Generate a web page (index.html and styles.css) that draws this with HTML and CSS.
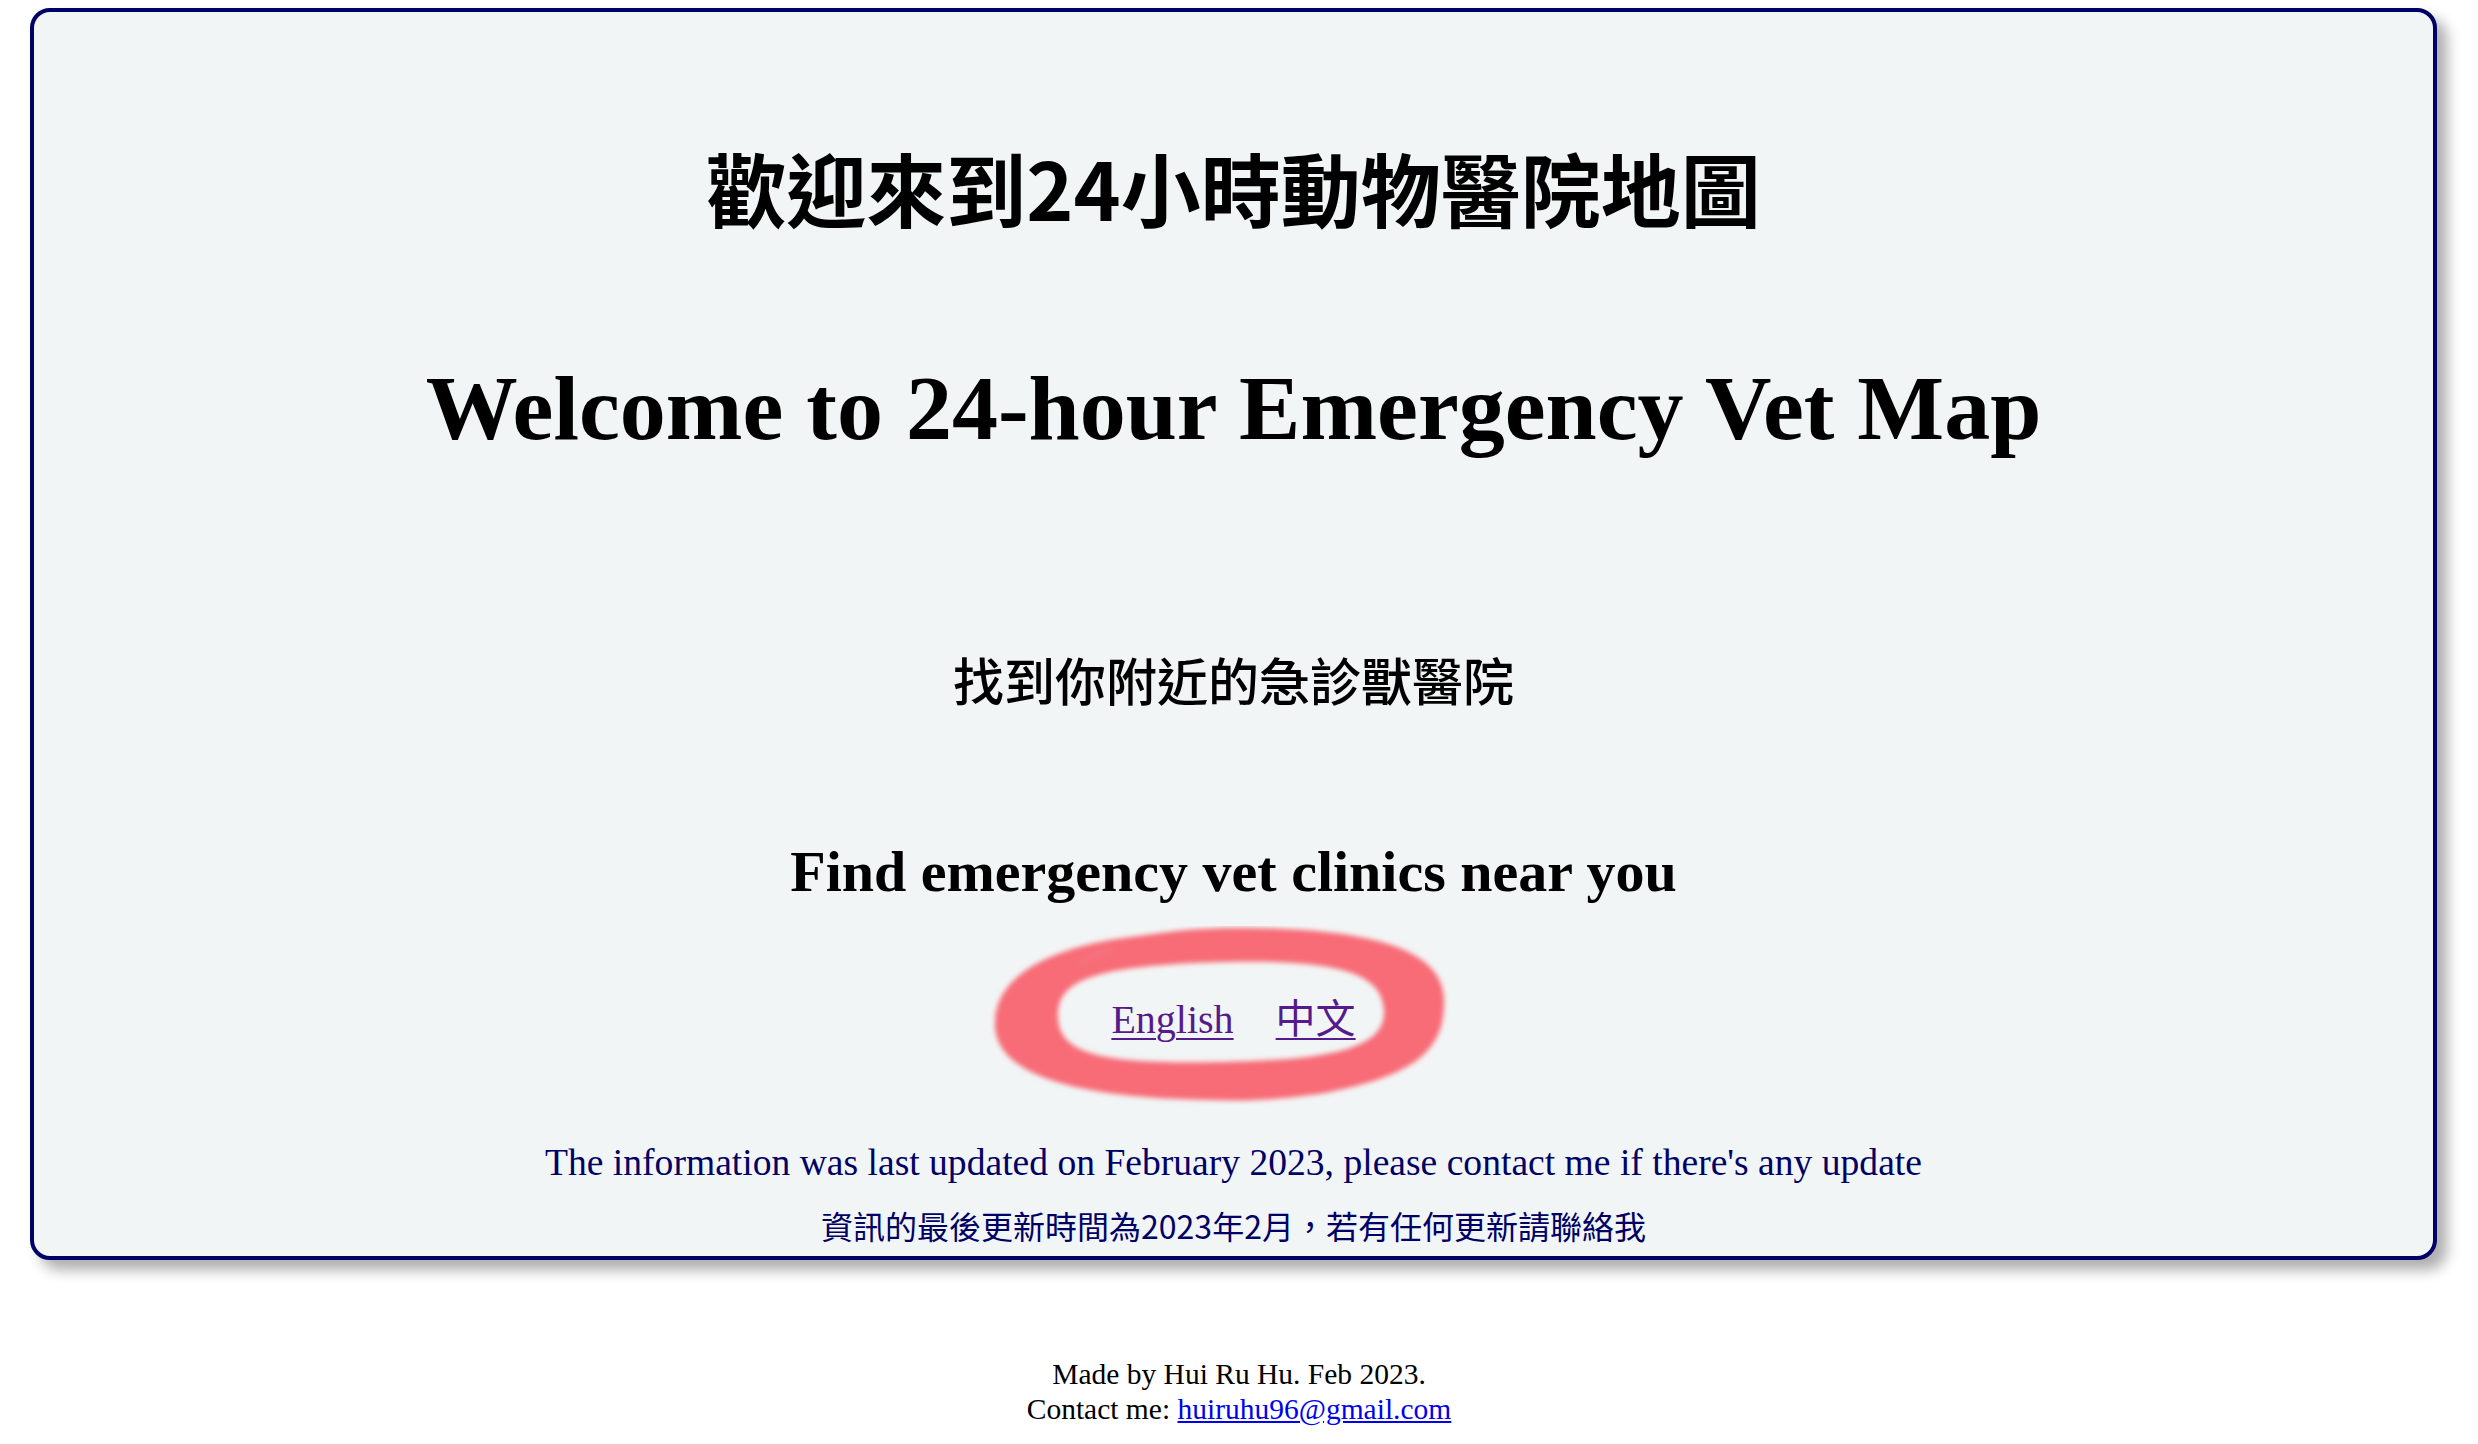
FILE: index.html
```html
<!DOCTYPE html>
<html lang="zh-Hant">
<head>
<meta charset="utf-8">
<title>24-hour Emergency Vet Map</title>
<link rel="stylesheet" href="styles.css">
</head>
<body>
<main class="card">
  <h1 class="title-zh">歡迎來到24小時動物醫院地圖</h1>
  <h1 class="title-en">Welcome to 24-hour Emergency Vet Map</h1>
  <h2 class="sub-zh">找到你附近的急診獸醫院</h2>
  <h2 class="sub-en">Find emergency vet clinics near you</h2>
  <div class="links">
    <svg class="circle" width="470" height="180" viewBox="0 0 470 180" aria-hidden="true">
      <defs>
        <filter id="soft" x="-10%" y="-10%" width="120%" height="120%">
          <feGaussianBlur stdDeviation="2.6"/>
        </filter>
      </defs>
      <g filter="url(#soft)">
        <path fill="#f8636f" fill-rule="evenodd" opacity="0.94"
          d="M 6 100 C 4 50, 60 20, 150 10 C 190 4, 215 2, 250 2 C 385 2, 453 24, 455 72 C 457 122, 430 150, 330 168 C 280 175, 250 175, 220 174 C 96 172, 8 152, 6 100 Z
             M 69 92 C 67 52, 110 40, 232 36 C 352 33, 393 48, 395 84 C 397 120, 350 134, 232 136 C 118 138, 71 130, 69 92 Z"/>
        <path fill="none" stroke="#f37a86" stroke-width="6" stroke-linecap="round" opacity="0.5" d="M 92 38 C 100 30, 110 26, 122 24"/>
      </g>
    </svg>
    <a class="lang" href="#en">English</a>
    <a class="lang" href="#zh">中文</a>
  </div>
  <p class="info-en">The information was last updated on February 2023, please contact me if there's any update</p>
  <p class="info-zh">資訊的最後更新時間為2023年2月，若有任何更新請聯絡我</p>
</main>
<footer class="footer">
  <p class="footer-line">Made by Hui Ru Hu. Feb 2023.</p>
  <p class="footer-line">Contact me: <a class="mail" href="mailto:huiruhu96@gmail.com">huiruhu96@gmail.com</a></p>
</footer>
</body>
</html>
```
FILE: styles.css
```css
html, body {
  margin: 0;
  padding: 0;
  background: #ffffff;
}

body {
  font-family: "Liberation Serif", "Noto Sans CJK TC", serif;
  color: #000000;
}

.card {
  margin: 8px 41px 0 30px;
  border: 4px solid #000066;
  border-radius: 20px;
  background: #f2f5f5;
  box-shadow: 10px 10px 14px rgba(0, 0, 0, 0.32);
  text-align: center;
  padding: 124px 0 9px;
}

.title-zh {
  margin: 0;
  font-family: "Noto Sans CJK TC", sans-serif;
  font-weight: 700;
  font-size: 80px;
  line-height: 100px;
}

.title-en {
  margin: 117px 0 0;
  font-family: "Liberation Serif", serif;
  font-weight: 700;
  font-size: 92px;
  line-height: 110px;
}

.sub-zh {
  margin: 181px 0 0;
  font-family: "Noto Sans CJK TC", sans-serif;
  font-weight: 500;
  font-size: 51px;
  line-height: 70px;
}

.sub-en {
  margin: 123px 0 0;
  font-family: "Liberation Serif", serif;
  font-weight: 700;
  font-size: 58px;
  line-height: 70px;
}

.links {
  position: relative;
  margin: 25px 0 0;
  height: 176px;
  display: flex;
  justify-content: center;
  align-items: center;
  gap: 42px;
}

.circle {
  position: absolute;
  left: 50%;
  top: -6px;
  margin-left: -245px;
  pointer-events: none;
}

.lang {
  position: relative;
  font-family: "Liberation Serif", "Noto Sans CJK TC", serif;
  font-size: 40px;
  line-height: 50px;
  color: #551a8b;
  text-decoration: underline;
  text-decoration-thickness: 2px;
  text-underline-offset: 5px;
}

.info-en {
  margin: 33px 0 0;
  font-family: "Liberation Serif", serif;
  font-size: 37.6px;
  line-height: 44px;
  color: #000066;
}

.info-zh {
  margin: 18px 0 0;
  font-family: "Noto Sans CJK TC", sans-serif;
  font-size: 32px;
  line-height: 44px;
  color: #000066;
}

.footer {
  margin: 97px 0 0;
  text-align: center;
}

.footer-line {
  margin: 0;
  font-family: "Liberation Serif", serif;
  font-size: 29.5px;
  line-height: 35px;
}

.mail {
  color: #0000ee;
  text-decoration: underline;
}
```
